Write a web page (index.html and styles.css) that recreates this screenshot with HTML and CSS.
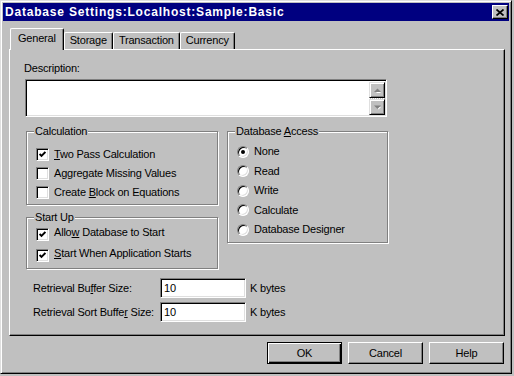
FILE: index.html
```html
<!DOCTYPE html>
<html>
<head>
    <meta charset="UTF-8">
    <title>Database Settings</title>
    <link rel="stylesheet" href="styles.css">
</head>
<body>
<div class="window">
    <div class="titlebar">
        <span class="title">Database Settings:Localhost:Sample:Basic</span>
        <span class="close">
            <svg width="8" height="7" viewBox="0 0 8 7"><path d="M0.5 0.5 L7.5 6.5 M7.5 0.5 L0.5 6.5" stroke="#000" stroke-width="1.7" fill="none"/></svg>
        </span>
    </div>
    <div class="content">
        <div class="tabs">
            <div class="tab active">General</div>
            <div class="tab">Storage</div>
            <div class="tab">Transaction</div>
            <div class="tab">Currency</div>
        </div>
        <div class="panel">
            <div class="desc-label">Description:</div>
            <div class="memo">
                <div class="memo-text"></div>
                <div class="vscroll">
                    <span class="sbtn">
                        <svg width="7" height="5" viewBox="0 0 7 5"><path d="M1 4 L6 4 L3.5 1.5 Z" fill="#fff" transform="translate(1 1)"/><path d="M0 4 L7 4 L3.5 0.5 Z" fill="#808080"/></svg>
                    </span>
                    <span class="track"></span>
                    <span class="sbtn">
                        <svg width="7" height="5" viewBox="0 0 7 5"><path d="M1 1 L6 1 L3.5 3.5 Z" fill="#fff" transform="translate(1 1)"/><path d="M0 0.5 L7 0.5 L3.5 4 Z" fill="#808080"/></svg>
                    </span>
                </div>
            </div>

            <div class="groups">
                <div class="col">
                    <fieldset class="group calc">
                        <legend>Calculation</legend>
                        <div class="opt"><span class="check"><svg width="7" height="7" viewBox="0 0 7 7"><path d="M0.6 3 L2.5 5 L6.4 1" stroke="#000" stroke-width="1.9" fill="none"/></svg></span><span><u>T</u>wo Pass Calculation</span></div>
                        <div class="opt"><span class="check"></span><span>Aggregate Missing Values</span></div>
                        <div class="opt"><span class="check"></span><span>Create <u>B</u>lock on Equations</span></div>
                    </fieldset>
                    <fieldset class="group startup">
                        <legend>Start Up</legend>
                        <div class="opt"><span class="check"><svg width="7" height="7" viewBox="0 0 7 7"><path d="M0.6 3 L2.5 5 L6.4 1" stroke="#000" stroke-width="1.9" fill="none"/></svg></span><span>Allo<u>w</u> Database to Start</span></div>
                        <div class="opt"><span class="check"><svg width="7" height="7" viewBox="0 0 7 7"><path d="M0.6 3 L2.5 5 L6.4 1" stroke="#000" stroke-width="1.9" fill="none"/></svg></span><span><u>S</u>tart When Application Starts</span></div>
                    </fieldset>
                </div>
                <fieldset class="group access">
                    <legend>Database <u>A</u>ccess</legend>
                    <div class="opt"><span class="radio on"></span><span>None</span></div>
                    <div class="opt"><span class="radio"></span><span>Read</span></div>
                    <div class="opt"><span class="radio"></span><span>Write</span></div>
                    <div class="opt"><span class="radio"></span><span>Calculate</span></div>
                    <div class="opt"><span class="radio"></span><span>Database Designer</span></div>
                </fieldset>
            </div>

            <div class="fields">
                <div class="field">
                    <label>Retrieval Bu<u>f</u>fer Size:</label>
                    <span class="edit">10</span>
                    <span class="unit">K bytes</span>
                </div>
                <div class="field">
                    <label>Retrieval Sort Buffe<u>r</u> Size:</label>
                    <span class="edit">10</span>
                    <span class="unit">K bytes</span>
                </div>
            </div>
        </div>
        <div class="buttons">
            <div class="btn default">OK</div>
            <div class="btn">Cancel</div>
            <div class="btn">Help</div>
        </div>
    </div>
</div>
</body>
</html>
```

FILE: styles.css
```css
body {
    margin: 0;
    background: #c0c0c0;
    font-family: "Liberation Sans", Arial, sans-serif;
    font-size: 11px;
    line-height: 13px;
    letter-spacing: -0.2px;
    color: #000;
}

u {
    text-decoration-thickness: 1px;
    text-underline-offset: 1px;
}

.window {
    width: 512px;
    height: 374px;
    box-sizing: border-box;
    padding: 2px;
    border: 1px solid;
    border-color: #dfdfdf #000 #000 #dfdfdf;
    box-shadow: inset 1px 1px #fff, inset -1px -1px #808080;
    display: flex;
    flex-direction: column;
}

.titlebar {
    height: 18px;
    flex: none;
    background: #000080;
    color: #fff;
    font-size: 12px;
    font-weight: bold;
    letter-spacing: 0.8px;
    display: flex;
    align-items: center;
    justify-content: space-between;
    padding: 0 1px 0 2px;
}

.close {
    width: 16px;
    height: 14px;
    box-sizing: border-box;
    background: #c0c0c0;
    border: 1px solid;
    border-color: #fff #000 #000 #fff;
    box-shadow: inset -1px -1px #808080;
    display: flex;
    align-items: center;
    justify-content: center;
}

.content {
    flex: 1;
    padding: 7px 4px 0 6px;
    display: flex;
    flex-direction: column;
}

.tabs {
    height: 21px;
    display: flex;
    align-items: flex-end;
    padding-left: 1px;
}

.tab {
    height: 17px;
    box-sizing: border-box;
    padding: 1px 5px 0 5px;
    border: 1px solid;
    border-bottom: none;
    border-color: #fff #000 #000 #fff;
    border-radius: 2px 2px 0 0;
    box-shadow: inset -1px 0 #808080;
}

.tab.active {
    height: 22px;
    margin-bottom: -1px;
    padding: 3px 7px 0 7px;
    background: #c0c0c0;
    position: relative;
    z-index: 1;
}

.panel {
    height: 287px;
    box-sizing: border-box;
    border: 1px solid;
    border-color: #fff #000 #000 #fff;
    box-shadow: inset -1px -1px #808080;
    padding: 12px 0 0 15px;
}

.desc-label {
    margin-left: -1px;
}

.memo {
    margin-top: 4px;
    width: 362px;
    height: 38px;
    box-sizing: border-box;
    border: 1px solid;
    border-color: #808080 #fff #fff #808080;
    box-shadow: inset 1px 1px #000, inset -1px -1px #dfdfdf;
    background: #fff;
    padding: 2px 1px 1px 2px;
    display: flex;
}

.memo-text {
    flex: 1;
}

.vscroll {
    width: 16px;
    display: flex;
    flex-direction: column;
}

.sbtn {
    height: 16px;
    box-sizing: border-box;
    background: #c0c0c0;
    border: 1px solid;
    border-color: #dfdfdf #000 #000 #dfdfdf;
    box-shadow: inset 1px 1px #fff, inset -1px -1px #808080;
    display: flex;
    align-items: center;
    justify-content: center;
}

.track {
    flex: 1;
    background: repeating-conic-gradient(#c0c0c0 0 25%, #fff 0 50%) 0 0 / 2px 2px;
}

.groups {
    margin-top: 8px;
    display: flex;
    gap: 9px;
    align-items: flex-start;
}

.col {
    display: flex;
    flex-direction: column;
    gap: 6px;
}

.group {
    margin: 0 0 0 1px;
    box-sizing: border-box;
    border: 1px solid #808080;
    box-shadow: inset 1px 1px #fff, 1px 1px #fff;
    padding: 0 0 0 8px;
    min-width: 0;
}

.group legend {
    padding: 0 1px;
    margin-left: -1px;
    background: #c0c0c0;
}

.calc {
    width: 192px;
    padding-top: 7px;
    padding-bottom: 2px;
}

.startup {
    width: 192px;
    padding-top: 2px;
}

.startup .opt {
    height: 21px;
    align-items: flex-start;
}

.startup .check {
    margin-top: 2px;
}

.access {
    width: 161px;
    margin-left: 0;
    height: 118px;
    padding-top: 4px;
}

.access .opt {
    height: 19.5px;
}

.opt {
    height: 19px;
    display: flex;
    align-items: center;
    gap: 5px;
}

.check {
    width: 13px;
    height: 13px;
    flex: none;
    margin-left: 1px;
    box-sizing: border-box;
    border: 1px solid;
    border-color: #808080 #fff #fff #808080;
    box-shadow: inset 1px 1px #000, inset -1px -1px #dfdfdf;
    background: #fff;
    display: flex;
    align-items: center;
    justify-content: center;
}

.radio {
    width: 12px;
    height: 12px;
    flex: none;
    margin-left: 1px;
    box-sizing: border-box;
    border-radius: 50%;
    border: 1px solid;
    border-color: #808080 #fff #fff #808080;
    box-shadow: inset 1px 1px #000, inset -1px -1px #dfdfdf;
    background: #fff;
    display: flex;
    align-items: center;
    justify-content: center;
}

.radio.on::after {
    content: "";
    width: 4px;
    height: 4px;
    border-radius: 50%;
    background: #000;
}

.fields {
    margin-top: 9px;
    padding-left: 8px;
    display: flex;
    flex-direction: column;
    gap: 4px;
}

.field {
    height: 20px;
    display: flex;
    align-items: center;
}

.field label {
    width: 127px;
}

.edit {
    width: 86px;
    height: 20px;
    box-sizing: border-box;
    border: 1px solid;
    border-color: #808080 #fff #fff #808080;
    box-shadow: inset 1px 1px #000, inset -1px -1px #dfdfdf;
    background: #fff;
    padding: 3px 0 0 3px;
}

.unit {
    margin-left: 4px;
}

.buttons {
    margin-top: 6px;
    display: flex;
    justify-content: flex-end;
    gap: 6px;
    padding-right: 1px;
}

.btn {
    width: 75px;
    height: 22px;
    box-sizing: border-box;
    border: 1px solid;
    border-color: #fff #000 #000 #fff;
    box-shadow: inset -1px -1px #808080;
    display: flex;
    align-items: center;
    justify-content: center;
}

.btn.default {
    border-color: #000;
    box-shadow: inset 1px 1px #fff, inset -1px -1px #000, inset -2px -2px #808080;
}
```
